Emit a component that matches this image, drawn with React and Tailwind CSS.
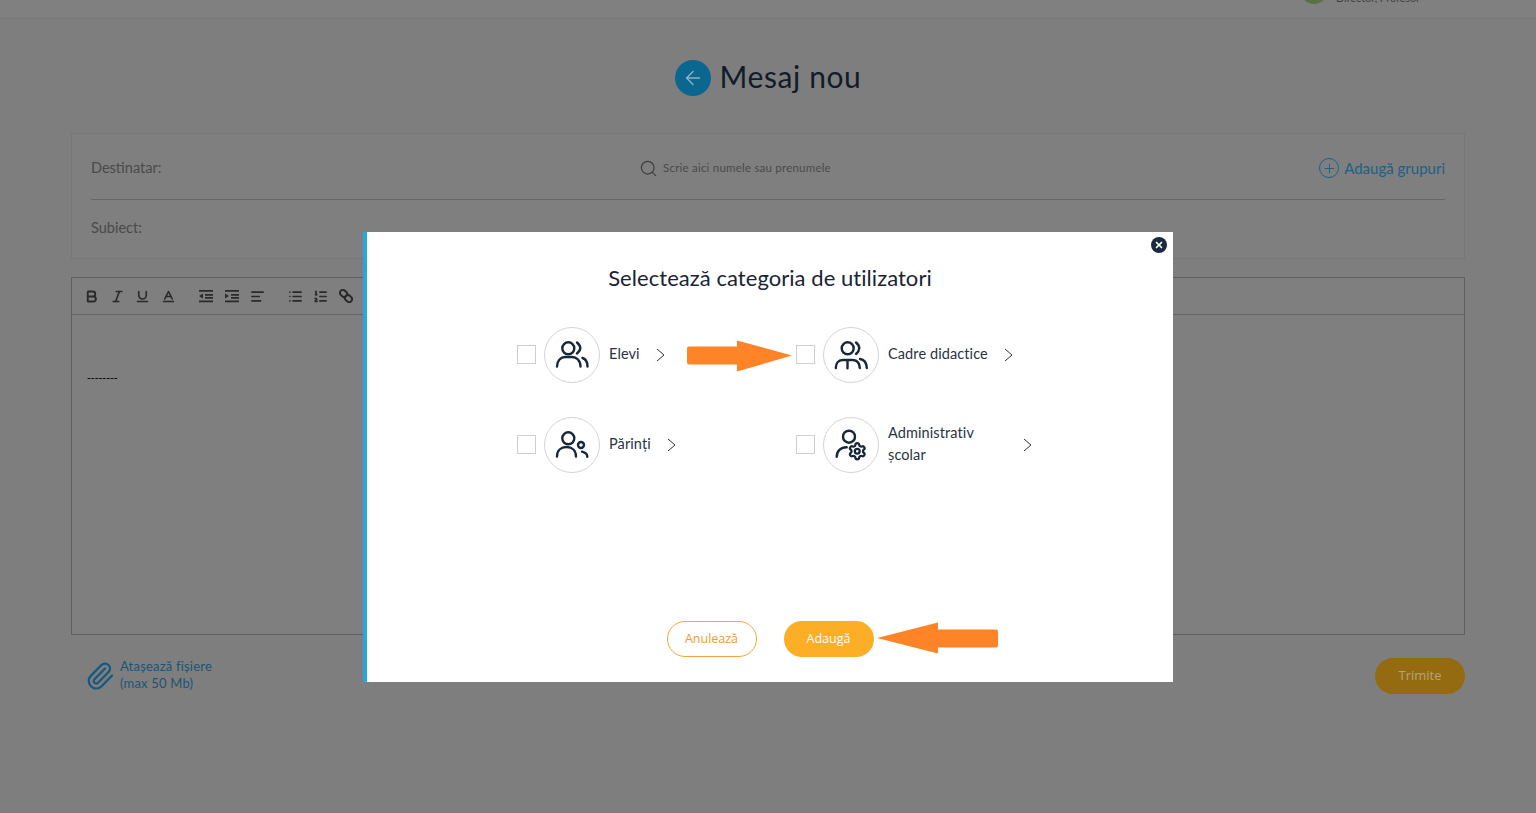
import { ArrowLeft, Search, Paperclip, Bold, Italic, Underline, Baseline, AlignLeft, List, ListOrdered, Plus, X, Settings } from "lucide-react";

const IndentLeft = () => (
  <svg width="14" height="14" viewBox="0 0 14 14" fill="#2a2a2a">
    <path d="M0 1h14v1.800H0zM6 5h8v1.800H6zM6 8h8v1.800H6zM0 11.400h14v1.800H0zM0 7l4-2.600v5.200z" />
  </svg>
);

const IndentRight = () => (
  <svg width="14" height="14" viewBox="0 0 14 14" fill="#2a2a2a">
    <path d="M0 1h14v1.800H0zM6 5h8v1.800H6zM6 8h8v1.800H6zM0 11.400h14v1.800H0zM4 7L0 4.400v5.200z" />
  </svg>
);

const ChainIcon = () => (
  <svg width="14" height="14" viewBox="0 0 14 14" fill="none" stroke="#2a2a2a" strokeWidth="2">
    <rect x="0.800" y="1.500" width="7.500" height="5.800" rx="2.900" transform="rotate(42 4.500 4.400)" />
    <rect x="5.700" y="6.700" width="7.500" height="5.800" rx="2.900" transform="rotate(42 9.500 9.600)" />
  </svg>
);

const tool = { size: 15, strokeWidth: 2.600, color: "#2a2a2a" };

const toolGroups = [
  [<Bold key="b" {...tool} strokeWidth={3} />, <Italic key="i" {...tool} />, <Underline key="u" {...tool} />, <Baseline key="a" {...tool} />],
  [<IndentLeft key="il" />, <IndentRight key="ir" />, <AlignLeft key="al" {...tool} />],
  [<List key="l" {...tool} />, <ListOrdered key="ol" {...tool} />, <ChainIcon key="c" />],
];

// icons inside the round badges, coordinates are badge pixels
const IconFrame = ({ children }) => (
  <svg width="56" height="56" viewBox="0 0 56 56" fill="none" stroke="#18263a" strokeWidth="2.400" strokeLinecap="round" className="absolute -left-px -top-px">
    {children}
  </svg>
);

const ElevIcon = () => (
  <IconFrame>
    <circle cx="24.300" cy="21.300" r="6" />
    <path d="M13 39.500C13 33.500 17 30 21 30h7c4.500 0 8.500 3.500 8.500 9.500" />
    <path d="M33 15.500Q39.500 21 33 26.500" />
    <path d="M38.500 31c3 1 5 4 5 8.500" />
  </IconFrame>
);

const ParentIcon = () => (
  <IconFrame>
    <circle cx="24.300" cy="21.300" r="6" />
    <path d="M13 39.500C13 33.500 17 30 22.500 30S32 33.500 32 39.500" />
    <circle cx="37" cy="28" r="3" />
    <path d="M38 34.700c3 .8 5.300 2.500 5.300 5" />
  </IconFrame>
);

const TeacherIcon = () => (
  <IconFrame>
    <circle cx="24.700" cy="21.300" r="6" />
    <path d="M33 15.500Q39.500 21 33 27" />
    <path d="M12.800 41c0-4.800 2.700-8 6.700-8" />
    <path d="M20.500 33h8M24.500 33v8.300" />
    <path d="M30 33c4 .2 6.500 3.500 6.800 8" />
    <path d="M37 32c3.800.5 6.500 4 6.800 9" />
  </IconFrame>
);

const AdminIcon = () => (
  <IconFrame>
    <circle cx="26" cy="19.700" r="6" />
    <path d="M13.700 39.700c0-5.500 4-9.400 10-9.400" />
    <Settings x="24.500" y="24.500" width="19.500" height="19.500" strokeWidth="2.800" color="#18263a" />
  </IconFrame>
);

const Chevron = () => (
  <svg width="9" height="14" viewBox="0 0 9 14" fill="none" stroke="#2a3342" strokeWidth="1" className="shrink-0">
    <path d="M1 1l7 6-7 6" />
  </svg>
);

const categories = [
  { label: "Elevi", icon: <ElevIcon /> },
  { label: "Cadre didactice", icon: <TeacherIcon /> },
  { label: "Părinți", icon: <ParentIcon /> },
  { label: "Administrativ școlar", icon: <AdminIcon />, wide: true },
];

const Category = ({ item }) => (
  <div className="flex items-center h-[56px]">
    <div className="w-[19px] h-[19px] -mt-[1px] border border-[#cfcfcf] bg-white shrink-0" />
    <div className="relative w-[56px] h-[56px] rounded-full border border-[#d4d4d4] ml-[8px] shrink-0">{item.icon}</div>
    <span className={`ml-[9px] mr-[16px] pb-[2px] text-[14.500px] tracking-[0.1px] text-[#2a3342] leading-[22px] ${item.wide ? "w-[119px]" : ""}`}>
      {item.label}
    </span>
    <Chevron />
  </div>
);

const Modal = () => (
  <div className="absolute left-[363px] top-[232px] w-[810px] h-[450px] bg-white border-l-[4px] border-[#27a7df] flex flex-col items-center">
    <button className="absolute right-[6px] top-[5px] w-[16px] h-[16px] rounded-full bg-[#1b2a3f] flex items-center justify-center">
      <X size={10} color="white" strokeWidth={4} />
    </button>

    <h2 className="mt-[31px] text-[22px] leading-[30px] tracking-[0.05px] text-[#1a2433]">Selectează categoria de utilizatori</h2>

    <div className="self-start ml-[150px] mt-[34px] grid grid-cols-[279px_auto] gap-y-[34px]">
      {categories.map((c) => (
        <Category key={c.label} item={c} />
      ))}
    </div>

    <div className="mt-auto mb-[25px] flex gap-[27px] font-['Open_Sans',sans-serif]">
      <button className="w-[90px] h-[36px] rounded-full border border-[#f5a53c] text-[12.500px] text-[#f39a2e]">Anulează</button>
      <button className="w-[90px] h-[36px] rounded-full bg-[#fcae26] text-[12.500px] text-white">Adaugă</button>
    </div>

    {/* arrows pasted over the screenshot */}
    <div className="absolute left-[320px] top-[108px]">
      <svg width="105" height="32" viewBox="0 0 105 32">
        <path d="M2 6.500H50V0.500L105 15.500 50 31.500V24.500H2Q0 24.500 0 22.500V8.500Q0 6.500 2 6.500Z" fill="#ff8427" />
      </svg>
    </div>
    <div className="absolute left-[510px] top-[390px]">
      <svg width="121" height="32" viewBox="0 0 121 32">
        <path d="M119 7.500H61V0.500L0 16 61 31.500V25.500H119Q121 25.500 121 23.500V9.500Q121 7.500 119 7.500Z" fill="#ff8427" />
      </svg>
    </div>
  </div>
);

export default function App() {
  return (
    <div className="relative h-[813px] overflow-hidden bg-[#7e7e7e] font-['Lato','Noto_Sans',sans-serif]">
      {/* header, mostly cut off */}
      <div className="h-[19px] bg-[#808080] border-b border-[#777] overflow-hidden flex justify-end pr-[116px]">
        <div className="w-[26px] h-[26px] rounded-full bg-[#5a7045] -mt-[22px]" />
        <span className="ml-[9px] -mt-[9px] text-[10.800px] leading-[14px] text-[#3f3f3f]">Director, Profesor</span>
      </div>

      <div className="mt-[41px] flex items-center justify-center gap-[9px]">
        <div className="w-[36px] h-[36px] rounded-full bg-[#0b6790] flex items-center justify-center">
          <ArrowLeft size={22} color="#8fb3c4" strokeWidth={1.500} />
        </div>
        <h1 className="pb-[4px] text-[30px] leading-[32px] tracking-[0.6px] text-[#121b2a]">Mesaj nou</h1>
      </div>

      <div className="mt-[37px] mx-[71px] h-[126px] border border-[#777] bg-[#7f7f7f] px-[19px]">
        <div className="h-[66px] pt-[3px] border-b border-[#666] flex items-center">
          <span className="w-[548px] text-[14.500px] text-[#4a4a4a]">Destinatar:</span>
          <Search size={19} color="#3d3d3d" strokeWidth={1.500} />
          <span className="ml-[5px] text-[11.500px] tracking-[0.22px] text-[#4a4a4a]">Scrie aici numele sau prenumele</span>
          <div className="ml-auto flex items-center gap-[5px] text-[#1c6186]">
            <div className="w-[20px] h-[20px] rounded-full border-[1.500px] border-[#1c6186] flex items-center justify-center">
              <Plus size={15} strokeWidth={1.500} />
            </div>
            <span className="text-[15px]">Adaugă grupuri</span>
          </div>
        </div>
        <div className="h-[56px] flex items-center">
          <span className="text-[14.500px] text-[#4a4a4a]">Subiect:</span>
        </div>
      </div>

      <div className="mt-[18px] mx-[71px] h-[358px] border border-[#5f5f5f] bg-[#7f7f7f]">
        <div className="h-[37px] border-b border-[#666] flex items-center gap-[12.500px] pl-[7px]">
          {toolGroups.map((group, i) => (
            <div key={i} className="flex">
              {group.map((icon, j) => (
                <div key={j} className="w-[25.500px] flex justify-center">
                  {icon}
                </div>
              ))}
            </div>
          ))}
        </div>
        <div className="pt-[54px] pl-[15px] text-[11.500px] leading-[16px] text-black font-['Liberation_Sans',sans-serif]">--------</div>
      </div>

      <div className="mt-[23px] mx-[71px] flex items-center justify-between">
        <div className="flex items-center ml-[14px]">
          <Paperclip size={30} color="#135a7f" strokeWidth={1.800} />
          <div className="ml-[5px] pb-[2px] text-[13px] tracking-[0.2px] leading-[17px] text-[#1b5475]">
            <div>Atașează fișiere</div>
            <div>(max 50 Mb)</div>
          </div>
        </div>
        <button className="w-[90px] h-[36px] rounded-full bg-[#956b11] text-[13px] text-[#b8a27c] font-['Open_Sans',sans-serif]">Trimite</button>
      </div>

      <Modal />
    </div>
  );
}
